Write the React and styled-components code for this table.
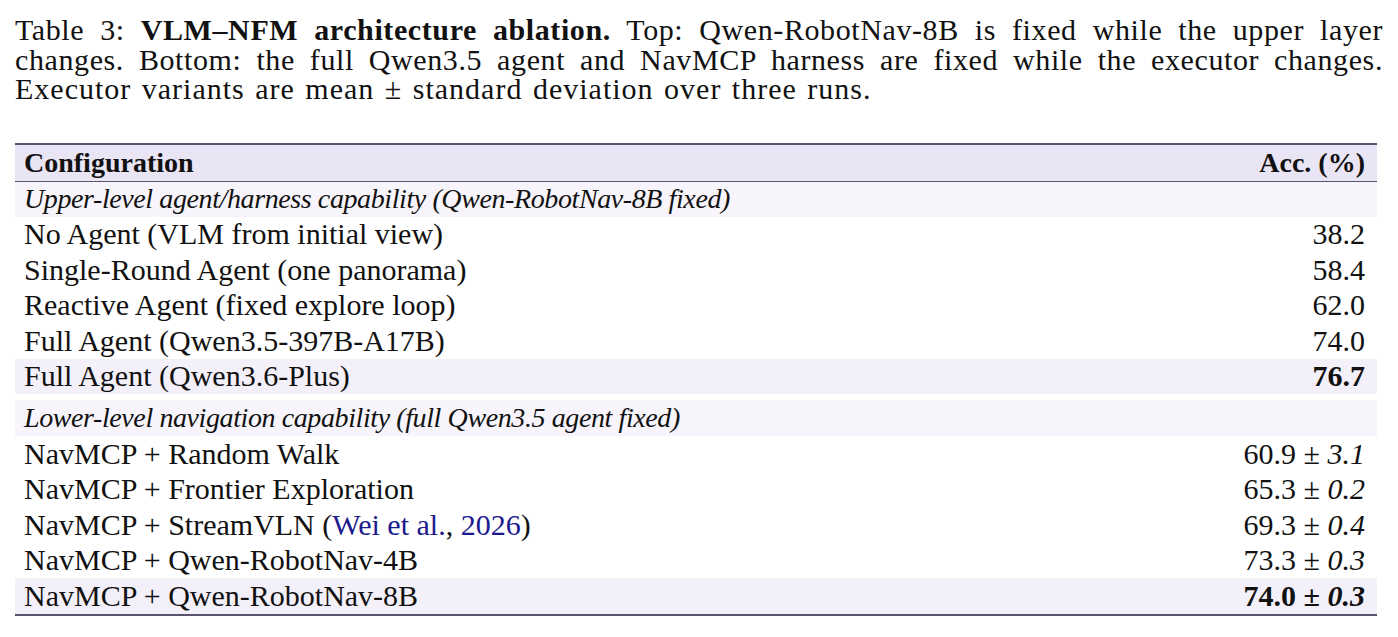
import React from 'react';
import styled, { createGlobalStyle } from 'styled-components';

const GlobalStyle = createGlobalStyle`
	html, body {
		margin: 0;
		padding: 0;
		background: #ffffff;
	}
	body {
		font-family: "Liberation Serif", "Times New Roman", serif;
		color: #111111;
	}
`;

const Page = styled.div`
	width: 1398px;
	height: 637px;
	padding: 15px 0 0 15px;
	box-sizing: border-box;
	overflow: hidden;
`;

const Caption = styled.div`
	width: 1368px;
	font-size: 30px;
	line-height: 29.5px;
`;

const CaptionLine = styled.div`
	text-align: justify;
	text-align-last: ${(p) => (p.$last ? 'left' : 'justify')};
	letter-spacing: ${(p) => (p.$last ? '1px' : '0.6px')};
	word-spacing: ${(p) => (p.$last ? '2px' : 'normal')};
	white-space: nowrap;
`;

const Table = styled.div`
	width: 1362px;
	margin-top: 39px;
	display: flex;
	flex-direction: column;
	font-size: 30px;
	border-top: 2px solid #5a5370;
	border-bottom: 2px solid #5a5370;
`;

const tones = {
	head: '#eae5f5',
	section: '#f7f5fb',
	mark: '#f4f0fa',
	plain: 'transparent'
};

const Row = styled.div`
	display: grid;
	grid-template-columns: 1fr auto;
	align-items: center;
	height: ${(p) => p.$h || 35.5}px;
	padding: 0 12px 0 9px;
	background: ${(p) => tones[p.$tone || 'plain']};
	border-bottom: ${(p) => (p.$rule ? '1px solid #5a5370' : 'none')};
	font-size: ${(p) => (p.$tone === 'head' || p.$tone === 'section' ? '28px' : '30px')};
	font-weight: ${(p) => (p.$tone === 'head' ? 700 : 400)};
	font-style: ${(p) => (p.$tone === 'section' ? 'italic' : 'normal')};
	letter-spacing: ${(p) => (p.$tone === 'section' ? '-0.4px' : 'normal')};
	white-space: nowrap;
`;

const Gap = styled.div`
	height: 6px;
`;

const Value = styled.span`
	text-align: right;
	font-weight: ${(p) => (p.$bold ? 700 : 400)};
`;

const Dev = styled.i`
	font-style: italic;
`;

const Cite = styled.span`
	color: #1b1a8e;
`;

const upper = [
	{ name: 'No Agent (VLM from initial view)', acc: '38.2' },
	{ name: 'Single-Round Agent (one panorama)', acc: '58.4' },
	{ name: 'Reactive Agent (fixed explore loop)', acc: '62.0' },
	{ name: 'Full Agent (Qwen3.5-397B-A17B)', acc: '74.0' },
	{ name: 'Full Agent (Qwen3.6-Plus)', acc: '76.7', best: true }
];

const lower = [
	{ name: 'NavMCP + Random Walk', acc: '60.9', dev: '3.1' },
	{ name: 'NavMCP + Frontier Exploration', acc: '65.3', dev: '0.2' },
	{
		name: (
			<>
				NavMCP + StreamVLN (<Cite>Wei et al.</Cite>, <Cite>2026</Cite>)
			</>
		),
		acc: '69.3',
		dev: '0.4'
	},
	{ name: 'NavMCP + Qwen-RobotNav-4B', acc: '73.3', dev: '0.3' },
	{ name: 'NavMCP + Qwen-RobotNav-8B', acc: '74.0', dev: '0.3', best: true }
];

function DataRow({ row }) {
	return (
		<Row $tone={row.best ? 'mark' : 'plain'}>
			<span>{row.name}</span>
			<Value $bold={row.best}>
				{row.acc}
				{row.dev && (
					<>
						{' ± '}
						<Dev>{row.dev}</Dev>
					</>
				)}
			</Value>
		</Row>
	);
}

export default function App() {
	return (
		<Page>
			<GlobalStyle />
			<Caption>
				<CaptionLine>
					Table 3: <b>VLM–NFM architecture ablation.</b> Top: Qwen-RobotNav-8B is fixed while the upper layer
				</CaptionLine>
				<CaptionLine>
					changes. Bottom: the full Qwen3.5 agent and NavMCP harness are fixed while the executor changes.
				</CaptionLine>
				<CaptionLine $last>
					Executor variants are mean ± standard deviation over three runs.
				</CaptionLine>
			</Caption>
			<Table>
				<Row $tone="head" $h={36} $rule>
					<span>Configuration</span>
					<Value $bold>Acc. (%)</Value>
				</Row>
				<Row $tone="section" $h={35}>
					<span>Upper-level agent/harness capability (Qwen-RobotNav-8B fixed)</span>
					<span />
				</Row>
				{upper.map((row) => (
					<DataRow key={row.acc + row.name} row={row} />
				))}
				<Gap />
				<Row $tone="section" $h={36}>
					<span>Lower-level navigation capability (full Qwen3.5 agent fixed)</span>
					<span />
				</Row>
				{lower.map((row, i) => (
					<DataRow key={i} row={row} />
				))}
			</Table>
		</Page>
	);
}
